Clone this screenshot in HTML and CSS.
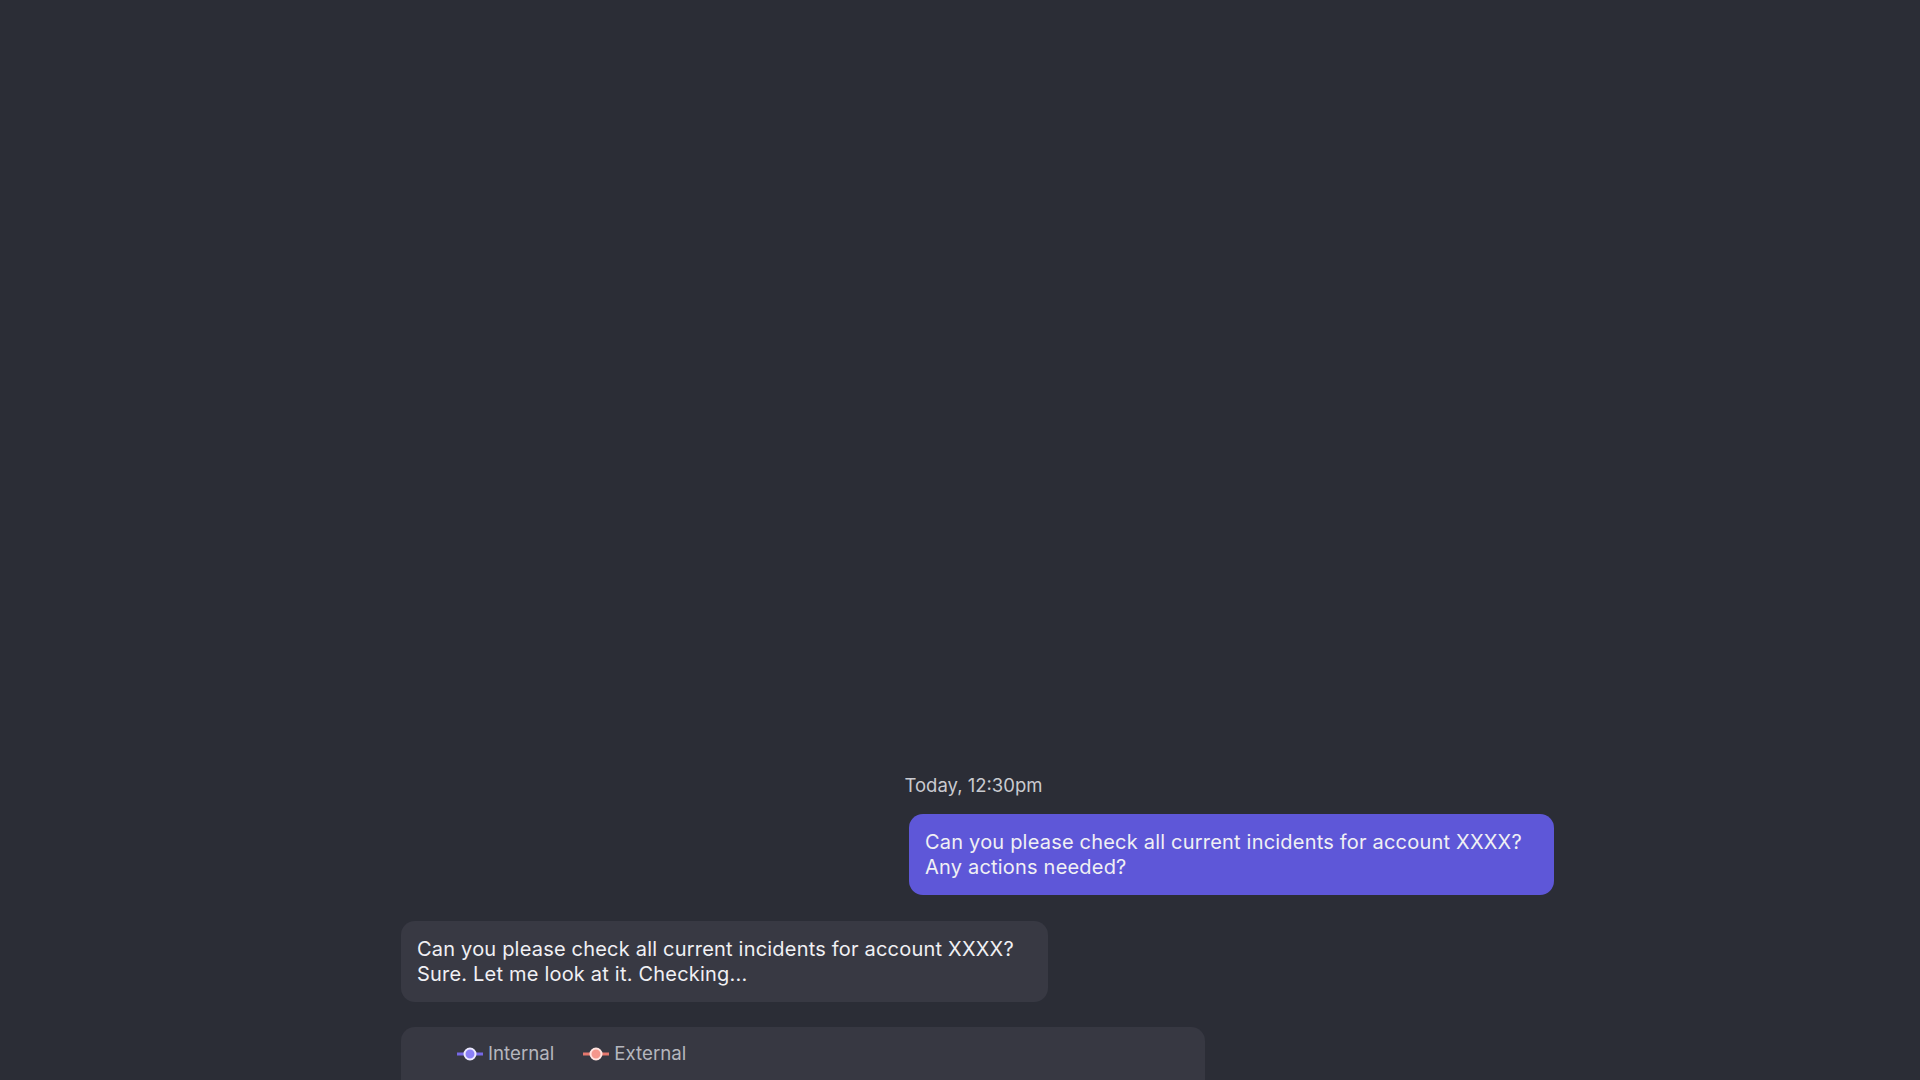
FILE: index.html
```html
<!DOCTYPE html>
<html lang="en">
<head>
<meta charset="utf-8">
<title>Chat</title>
<link rel="stylesheet" href="styles.css">
</head>
<body>
<main class="chat">
  <div class="timestamp">Today, 12:30pm</div>
  <div class="bubble bubble-out">Can you please check all current incidents for account XXXX?<br>Any actions needed?</div>
  <div class="bubble bubble-in">Can you please check all current incidents for account XXXX?<br>Sure. Let me look at it. Checking...</div>
  <section class="legend-panel">
    <div class="legend">
      <span class="legend-item">
        <svg class="legend-icon" width="26" height="14" viewBox="0 0 26 14">
          <line x1="0" y1="7" x2="26" y2="7" stroke="#7668e6" stroke-width="3"/>
          <circle cx="13" cy="7" r="5.5" fill="#8a7ff6" stroke="#ece9ff" stroke-width="2"/>
        </svg>
        Internal
      </span>
      <span class="legend-item">
        <svg class="legend-icon" width="26" height="14" viewBox="0 0 26 14">
          <line x1="0" y1="7" x2="26" y2="7" stroke="#e4776d" stroke-width="3"/>
          <circle cx="13" cy="7" r="5.5" fill="#f4978c" stroke="#ffe3df" stroke-width="2"/>
        </svg>
        External
      </span>
    </div>
  </section>
</main>
</body>
</html>
```

FILE: styles.css
```css
html, body {
  margin: 0;
  padding: 0;
}

body {
  background: #2b2d36;
  height: 1080px;
  overflow: hidden;
  font-family: Inter, "Liberation Sans", sans-serif;
  color: #ececf0;
}

.chat {
  display: flex;
  flex-direction: column;
  margin-left: 401px;
  width: 1153px;
  padding-top: 773px;
}

.timestamp {
  align-self: center;
  margin-right: 8px;
  font-size: 18.5px;
  line-height: 24px;
  color: #c9cad0;
}

.bubble {
  box-sizing: border-box;
  padding: 16px;
  font-size: 20px;
  line-height: 24.5px;
  letter-spacing: 0.2px;
  border-radius: 14px;
  color: #f0f0f4;
}

.bubble-out {
  align-self: flex-end;
  width: 645px;
  margin-top: 17px;
  background: #5e57d8;
}

.bubble-in {
  align-self: flex-start;
  width: 647px;
  margin-top: 26px;
  background: #383943;
}

.legend-panel {
  width: 804px;
  height: 120px;
  margin-top: 25px;
  background: #373842;
  border-radius: 14px;
  box-sizing: border-box;
  padding: 15px 0 0 56px;
}

.legend {
  display: flex;
  gap: 29px;
  align-items: center;
}

.legend-item {
  display: flex;
  align-items: center;
  gap: 5px;
  font-size: 18.7px;
  line-height: 24px;
  color: #b5b6bd;
}

.legend-icon {
  display: block;
}
```
